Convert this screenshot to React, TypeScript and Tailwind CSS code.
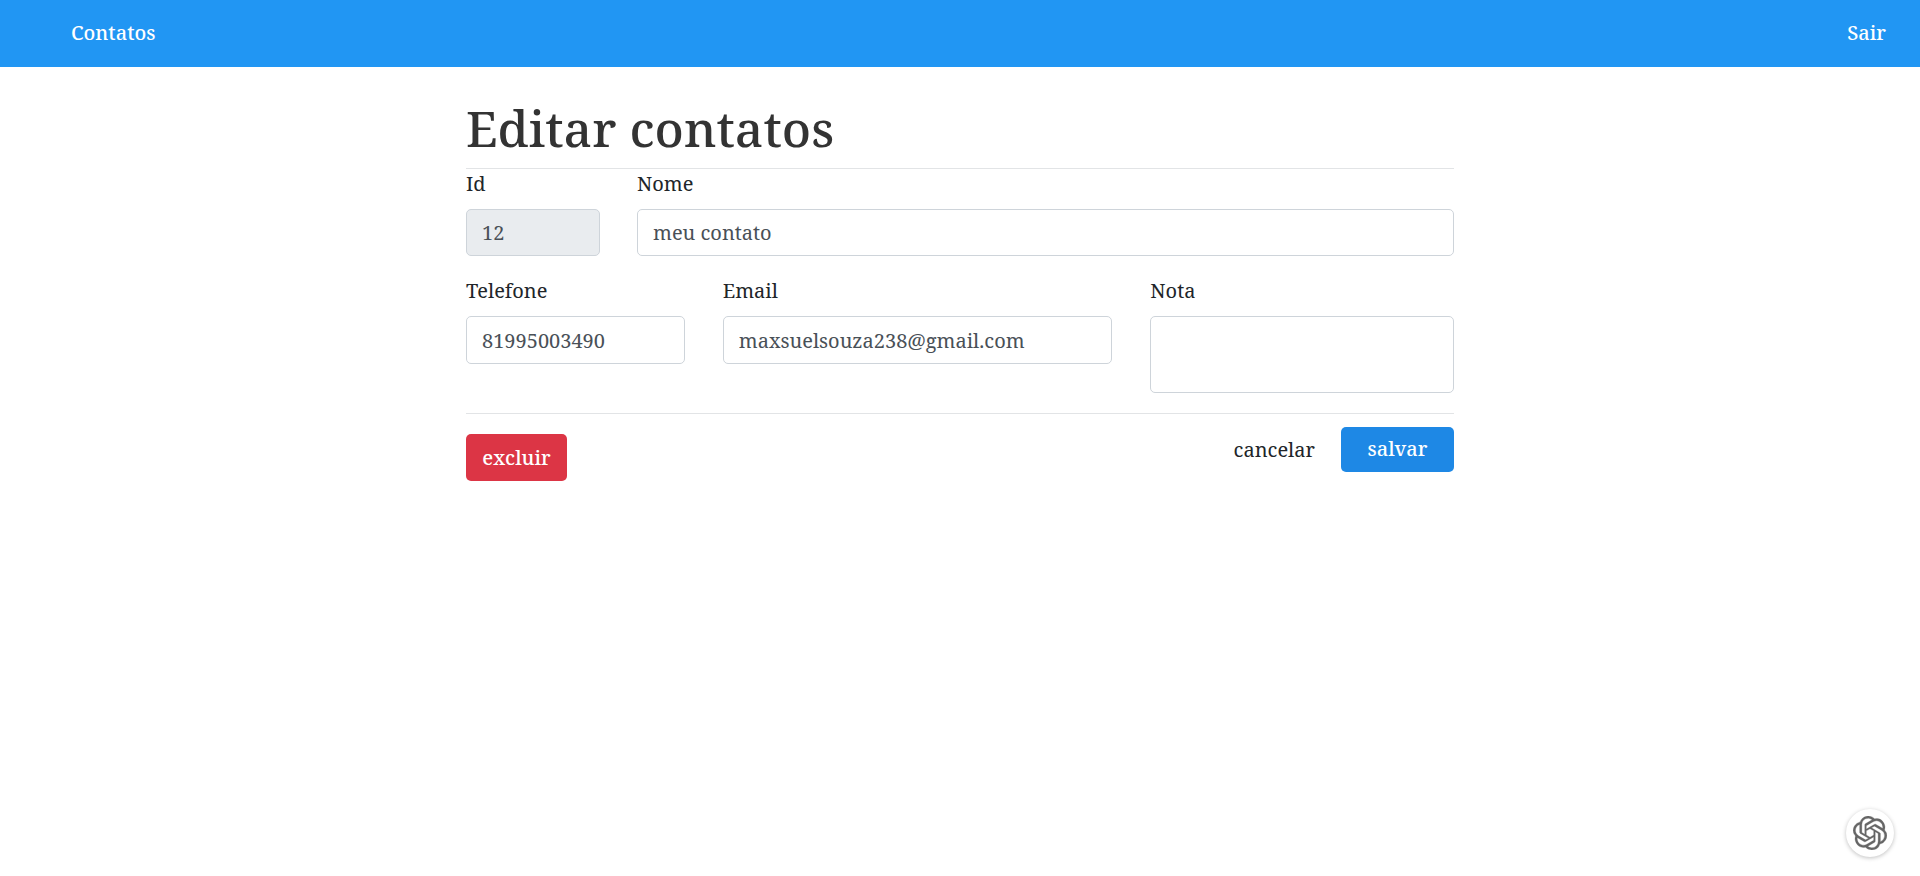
import { SiOpenai } from "react-icons/si";

const control =
  "block w-full rounded-[5px] border border-[#ced4da] bg-white px-[15px] text-xl text-[#495057] outline-none focus:border-[#80bdff]";
const label = "mb-[10px] block leading-[30px]";

export default function App() {
  return (
    <div className="min-h-screen bg-white font-['Noto_Serif','Droid_Serif','DejaVu_Serif',serif] text-xl text-[#212529]">
      <nav className="flex h-[67px] items-center justify-between bg-[#2196f3] pr-[34px] pb-[2px] pl-[71px] font-medium text-white">
        <a href="#contatos">Contatos</a>
        <a href="#sair">Sair</a>
      </nav>

      <main className="mx-auto w-full max-w-[988px] pt-[31px]">
        <h1 className="mb-[10px] text-[50px] leading-[60px] font-medium text-[#333333]">Editar contatos</h1>
        <form onSubmit={(e) => e.preventDefault()}>
          <div className="grid grid-cols-[134fr_817fr] gap-x-[37px] border-t border-[#e2e4e6]">
            <div>
              <label htmlFor="id" className={label}>Id</label>
              <input id="id" disabled defaultValue="12" className="block h-[47px] w-full rounded-[5px] border border-[#ced4da] bg-[#e9ecef] px-[15px] text-xl text-[#495057]" />
            </div>
            <div>
              <label htmlFor="nome" className={label}>Nome</label>
              <input id="nome" defaultValue="meu contato" className={`h-[47px] ${control}`} />
            </div>
          </div>

          <div className="mt-5 grid grid-cols-[219fr_390fr_304fr] gap-x-[38px]">
            <div>
              <label htmlFor="telefone" className={label}>Telefone</label>
              <input id="telefone" type="tel" defaultValue="81995003490" className={`h-[48px] ${control}`} />
            </div>
            <div>
              <label htmlFor="email" className={label}>Email</label>
              <input id="email" type="email" defaultValue="maxsuelsouza238@gmail.com" className={`h-[48px] ${control}`} />
            </div>
            <div>
              <label htmlFor="nota" className={label}>Nota</label>
              <textarea id="nota" className={`h-[77px] resize-none py-2 ${control}`} />
            </div>
          </div>

          <div className="mt-5 flex items-start justify-between border-t border-[#e2e4e6]">
            <button type="button" className="mt-5 h-[47px] w-[101px] rounded-[5px] bg-[#dc3545] font-medium text-white">
              excluir
            </button>
            <div className="mt-[13px] flex items-center gap-[26px]">
              <a href="#contatos">cancelar</a>
              <button type="submit" className="h-[45px] w-[113px] rounded-[5px] bg-[#1e88e5] pb-[2px] font-medium text-white">
                salvar
              </button>
            </div>
          </div>
        </form>
      </main>

      <button
        type="button"
        aria-label="ChatGPT"
        className="fixed right-[26px] bottom-[19px] flex size-[48px] items-center justify-center rounded-full bg-white text-[#666666] shadow-[0_1px_4px_rgba(0,0,0,0.25)]"
      >
        <SiOpenai size={34} stroke="currentColor" strokeWidth={0.2} />
      </button>
    </div>
  );
}
